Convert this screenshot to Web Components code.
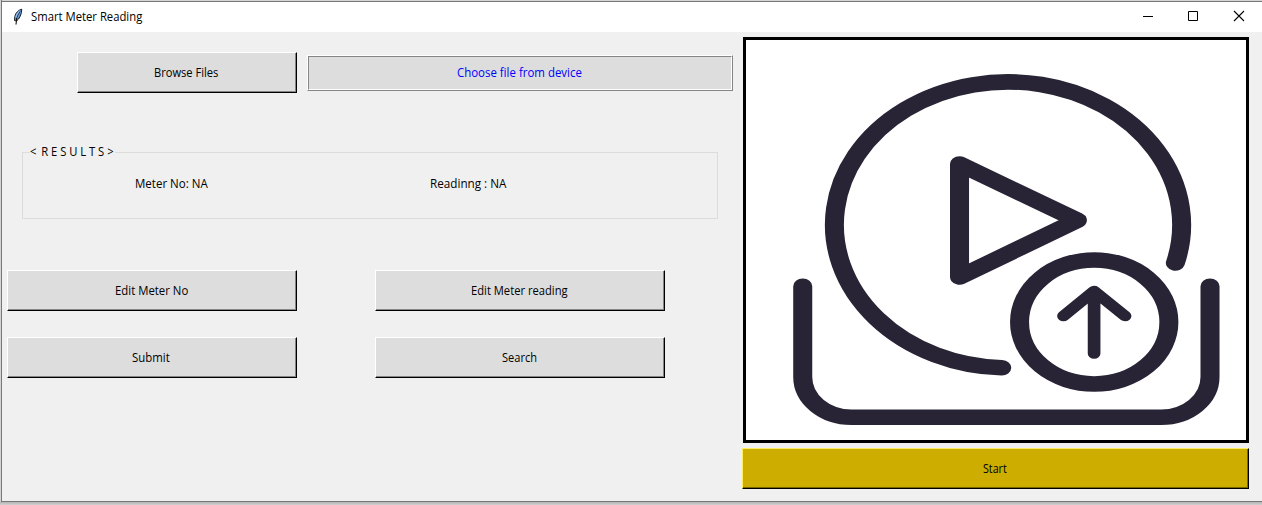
<!DOCTYPE html>
<html lang="en">
<head>
<meta charset="utf-8">
<title>Smart Meter Reading</title>
<style>
html,body{margin:0;height:100%;overflow:hidden}
body{font:12px/16px "Open Sans","Noto Sans",sans-serif;color:#000;background:linear-gradient(#d5d5d5 0 501px,#b4b4b4 502px,#d0d0d0 505px)}
</style>
</head>
<body>
<meter-app></meter-app>
<script>
const define=(name,html,setup)=>customElements.define(name,class extends HTMLElement{
  connectedCallback(){
    if(this.shadowRoot)return;
    const t=document.createElement('template');
    t.innerHTML=html;
    this.attachShadow({mode:'open'}).append(t.content.cloneNode(true));
    if(setup)setup(this,this.shadowRoot);
  }
});

// Condenses a run of text so that it occupies exactly the given width.
define('fit-text',`<style>
:host{display:inline-block;white-space:pre;text-align:left;height:16px;line-height:16px;flex:none}
span{display:inline-block;transform-origin:0 50%;white-space:pre}
</style><span><slot></slot></span>`,(host,root)=>{
  const w=+host.getAttribute('w'),s=root.querySelector('span');
  host.style.width=w+'px';
  s.style.transform='scaleX('+w/s.offsetWidth+')';
});

define('tk-button',`<style>
:host{display:flex;box-sizing:border-box;height:41px;align-items:center;justify-content:center;padding:1px 2px 0 0;
background:var(--face,#ddd);border:1px solid;border-color:var(--light,#fff) #000 #000 var(--light,#fff);
box-shadow:inset -1px -1px var(--dark,#858585)}
</style><slot></slot>`);

define('tk-ridge',`<style>
:host{display:block;box-sizing:border-box;height:36px;border:1px solid;border-color:#fff #858585 #858585 #fff;color:#00f}
div{box-sizing:border-box;height:34px;border:1px solid;border-color:#858585 #fff #fff #858585;background:#ddd;display:flex;align-items:center;justify-content:center;padding-right:1px}
</style><div><slot></slot></div>`);

define('result-group',`<style>
:host{display:block}
fieldset{box-sizing:border-box;width:696px;height:75px;margin:0;padding:0;border:1px solid #dcdcdc;min-width:0}
legend{margin-left:7px;padding:0 1px 0 0;height:16px;display:block}
div{display:grid;grid-template-columns:295px 1fr;padding:16px 0 0 112px}
</style><fieldset><legend><fit-text w="84">&lt;&thinsp; R E S U L T S &gt;</fit-text></legend><div><slot></slot></div></fieldset>`);

define('title-bar',`<style>
:host{display:flex;height:30px;background:#fff;align-items:center}
.feather{width:12px;height:18px;margin:0 7px 0 10px}
.controls{margin:0 -1px 0 auto;display:flex}
.controls svg{display:block;width:46px;height:30px}
</style>
<svg class="feather" viewBox="0 0 12 18">
<path d="M9.8 1.2C6.5 1.8 3.5 5 2.8 8.5L2.5 12.5L4.5 13C7.5 11 9.7 6 9.8 1.2Z" fill="#6799d6" stroke="#16202c" stroke-width="1"/>
<path d="M8.3 3.3C6.3 6 5 9 4.2 12" fill="none" stroke="#26415f" stroke-width="1"/>
<path d="M7.5 3C5.3 4.7 4 7.5 3.8 9.5" fill="none" stroke="#b5d2f3" stroke-width=".8"/>
<path d="M4.7 10L4 16.5" stroke="#111" stroke-width="1.1"/></svg>
<fit-text w="111">Smart Meter Reading</fit-text>
<div class="controls">
<svg viewBox="0 0 46 30"><path d="M18 14.5H28" stroke="#000"/></svg>
<svg viewBox="0 0 46 30"><path d="M17.5 9.5h9v9h-9z" fill="none" stroke="#000"/></svg>
<svg viewBox="0 0 46 30"><path d="M17 9L27 19M27 9L17 19" stroke="#000" stroke-width="1.1"/></svg>
</div>`);

define('upload-picture',`<style>
:host{display:block;box-sizing:border-box;width:506px;height:406px;border:3px solid #000;background:#fff}
svg{display:block;width:500px;height:400px}
</style>
<svg viewBox="0 0 409.8 400" preserveAspectRatio="none" fill="none" stroke="#282435" stroke-width="15.6" stroke-linecap="round" stroke-linejoin="round">
<path d="M209.6 327.8A142.3 143 0 1 1 351.9 223"/>
<path d="M175 124L271.6 180.3L175 237Z"/>
<ellipse cx="285.4" cy="282" rx="61.2" ry="62"/>
<path d="M285.3 313.5V251M260.2 276L285.3 251L310.7 276" stroke-width="10.4"/>
<path d="M46.5 246.2V337A40 40.2 0 0 0 86.5 377.2H340.3A40 40.2 0 0 0 380.3 337V246.2"/>
</svg>`);

define('meter-app',`<style>
:host{display:block;box-sizing:border-box;height:502px;margin-left:1px;border-left:1px solid #777;border-bottom:1px solid #777;padding-top:1px}
.frame{box-sizing:border-box;height:500px;border-top:1px solid #777;background:#f0f0f0}
main{display:grid;grid-template-columns:740px 507px}
.files{display:grid;grid-template-columns:220px 426px;gap:10px;align-items:center;padding:20px 0 0 75px}
.files tk-ridge{margin-top:1px}
result-group{margin:51px 0 0 20px}
.actions{display:grid;grid-template-columns:290px 290px;gap:26px 78px;padding:51px 0 0 5px}
upload-picture{margin:5px 0 5px 1px}
.start{--face:#cdad00;--light:#ffef60;--dark:#796800}
</style>
<div class="frame">
<title-bar></title-bar>
<main>
<section>
<div class="files">
<tk-button><fit-text w="64">Browse Files</fit-text></tk-button>
<tk-ridge><fit-text w="125">Choose file from device</fit-text></tk-ridge>
</div>
<result-group><fit-text w="73">Meter No: NA</fit-text><fit-text w="76">Readinng : NA</fit-text></result-group>
<div class="actions">
<tk-button><fit-text w="73">Edit Meter No</fit-text></tk-button>
<tk-button><fit-text w="97">Edit Meter reading</fit-text></tk-button>
<tk-button><fit-text w="38">Submit</fit-text></tk-button>
<tk-button><fit-text w="35">Search</fit-text></tk-button>
</div>
</section>
<section>
<upload-picture></upload-picture>
<tk-button class="start"><fit-text w="24">Start</fit-text></tk-button>
</section>
</main>
</div>`);
</script>
</body>
</html>
